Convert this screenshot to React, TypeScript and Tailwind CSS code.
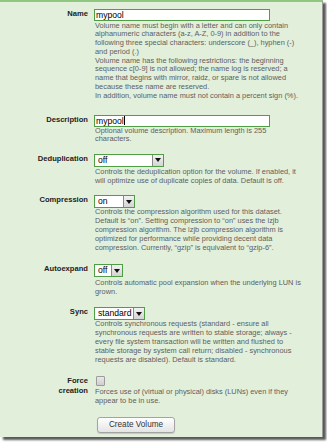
import React from "react";

const font = { fontFamily: '"Liberation Sans", Arial, sans-serif' };

function Label({ children }: { children: React.ReactNode }) {
  return (
    <div className="w-[88px] shrink-0 text-right text-[7.6px] font-bold leading-[10px] text-[#222]">
      {children}
    </div>
  );
}

function Help({ lines, className = "" }: { lines: string[]; className?: string }) {
  return (
    <div className={"text-[7.4px] leading-[8.8px] text-[#5e5e5e] whitespace-nowrap " + className}>
      {lines.map((l, i) => (
        <div key={i}>{l}</div>
      ))}
    </div>
  );
}

function Select({ value, width }: { value: string; width: string }) {
  return (
    <div className={"flex h-[13px] items-stretch border-[1.5px] border-[#4f9d45] bg-white " + width}>
      <div className="flex-1 pl-[3px] text-[8.6px] leading-[10px] text-black">{value}</div>
      <div className="flex w-[11px] items-center justify-center border-l border-[#8a8a8a] bg-gradient-to-b from-[#f2f2f2] to-[#d4d4d4]">
        <svg width="6" height="4" viewBox="0 0 6 4">
          <path d="M0 0 H6 L3 4 Z" fill="#111" />
        </svg>
      </div>
    </div>
  );
}

function TextInput({ value, caret }: { value: string; caret?: boolean }) {
  return (
    <div className="flex h-[12px] w-[176px] items-center border-[1.5px] border-[#4f9d45] bg-white pl-[1px] text-[8.6px] leading-[10px] text-black">
      {value}
      {caret && <span className="ml-[0.5px] inline-block h-[9px] w-px bg-black" />}
    </div>
  );
}

export default function App() {
  return (
    <div className="h-[442px] w-[327px] bg-white" style={font}>
      <div className="h-[437px] w-[323px] border-t-2 border-r border-[#8fc77f] border-r-[#9a9a9a] bg-[#e2efdb] shadow-[3px_3px_2px_rgba(0,0,0,0.65)]">
        {/* Name */}
        <div className="mt-[7px] flex gap-[6px]">
          <Label>Name</Label>
          <div>
            <TextInput value="mypool" />
            <Help
              className="mt-[0.5px] pl-px"
              lines={[
                "Volume name must begin with a letter and can only contain",
                "alphanumeric characters (a-z, A-Z, 0-9) in addition to the",
                "following three special characters: underscore (_), hyphen (-)",
                "and period (.)",
                "Volume name has the following restrictions: the beginning",
                "sequence c[0-9] is not allowed; the name log is reserved; a",
                "name that begins with mirror, raidz, or spare is not allowed",
                "because these name are reserved.",
                "In addition, volume name must not contain a percent sign (%).",
              ]}
            />
          </div>
        </div>

        {/* Description */}
        <div className="mt-[14px] flex gap-[6px]">
          <Label>Description</Label>
          <div>
            <TextInput value="mypool" caret />
            <Help
              className="pl-px"
              lines={["Optional volume description. Maximum length is 255", "characters."]}
            />
          </div>
        </div>

        {/* Deduplication */}
        <div className="mt-[9.5px] flex gap-[6px]">
          <Label>Deduplication</Label>
          <div>
            <Select value="off" width="w-[70px]" />
            <Help
              className="mt-[1.5px] pl-px"
              lines={[
                "Controls the deduplication option for the volume. If enabled, it",
                "will optimize use of duplicate copies of data. Default is off.",
              ]}
            />
          </div>
        </div>

        {/* Compression */}
        <div className="mt-[9.5px] flex gap-[6px]">
          <Label>Compression</Label>
          <div>
            <Select value="on" width="w-[41px]" />
            <Help
              className="pl-px"
              lines={[
                "Controls the compression algorithm used for this dataset.",
                "Default is \u201con\u201d. Setting compression to \u201con\u201d uses the lzjb",
                "compression algorithm. The lzjb compression algorithm is",
                "optimized for performance while providing decent data",
                "compression. Currently, \u201cgzip\u201d is equivalent to \u201cgzip-6\u201d.",
              ]}
            />
          </div>
        </div>

        {/* Autoexpand */}
        <div className="mt-[12px] flex gap-[6px]">
          <Label>Autoexpand</Label>
          <div>
            <Select value="off" width="w-[29px]" />
            <Help
              className="mt-[1.5px] pl-px"
              lines={["Controls automatic pool expansion when the underlying LUN is", "grown."]}
            />
          </div>
        </div>

        {/* Sync */}
        <div className="mt-[11px] flex gap-[6px]">
          <Label>Sync</Label>
          <div>
            <Select value="standard" width="w-[51px]" />
            <Help
              className="pl-px"
              lines={[
                "Controls synchronous requests (standard - ensure all",
                "synchronous requests are written to stable storage; always -",
                "every file system transaction will be written and flushed to",
                "stable storage by system call return; disabled - synchronous",
                "requests are disabled). Default is standard.",
              ]}
            />
          </div>
        </div>

        {/* Force creation */}
        <div className="mt-[12px] flex gap-[6px]">
          <Label>
            Force
            <br />
            creation
          </Label>
          <div>
            <div className="ml-[2px] h-[10px] w-[9px] rounded-[1px] border border-[#9c9c9c] bg-gradient-to-b from-[#e8e8e8] to-[#cfcfcf]" />
            <Help
              className="mt-[2px] pl-px"
              lines={[
                "Forces use of (virtual or physical) disks (LUNs) even if they",
                "appear to be in use.",
              ]}
            />
          </div>
        </div>

        {/* Button */}
        <div className="mt-[11px] pl-[97px]">
          <div className="flex h-[16px] w-[78px] items-center justify-center rounded-[3px] border border-[#a3a3a3] bg-gradient-to-b from-white to-[#e4e4e4] text-[8.2px] text-[#333] shadow-[0_1px_1px_rgba(0,0,0,0.15)]">
            Create Volume
          </div>
        </div>
      </div>
    </div>
  );
}
